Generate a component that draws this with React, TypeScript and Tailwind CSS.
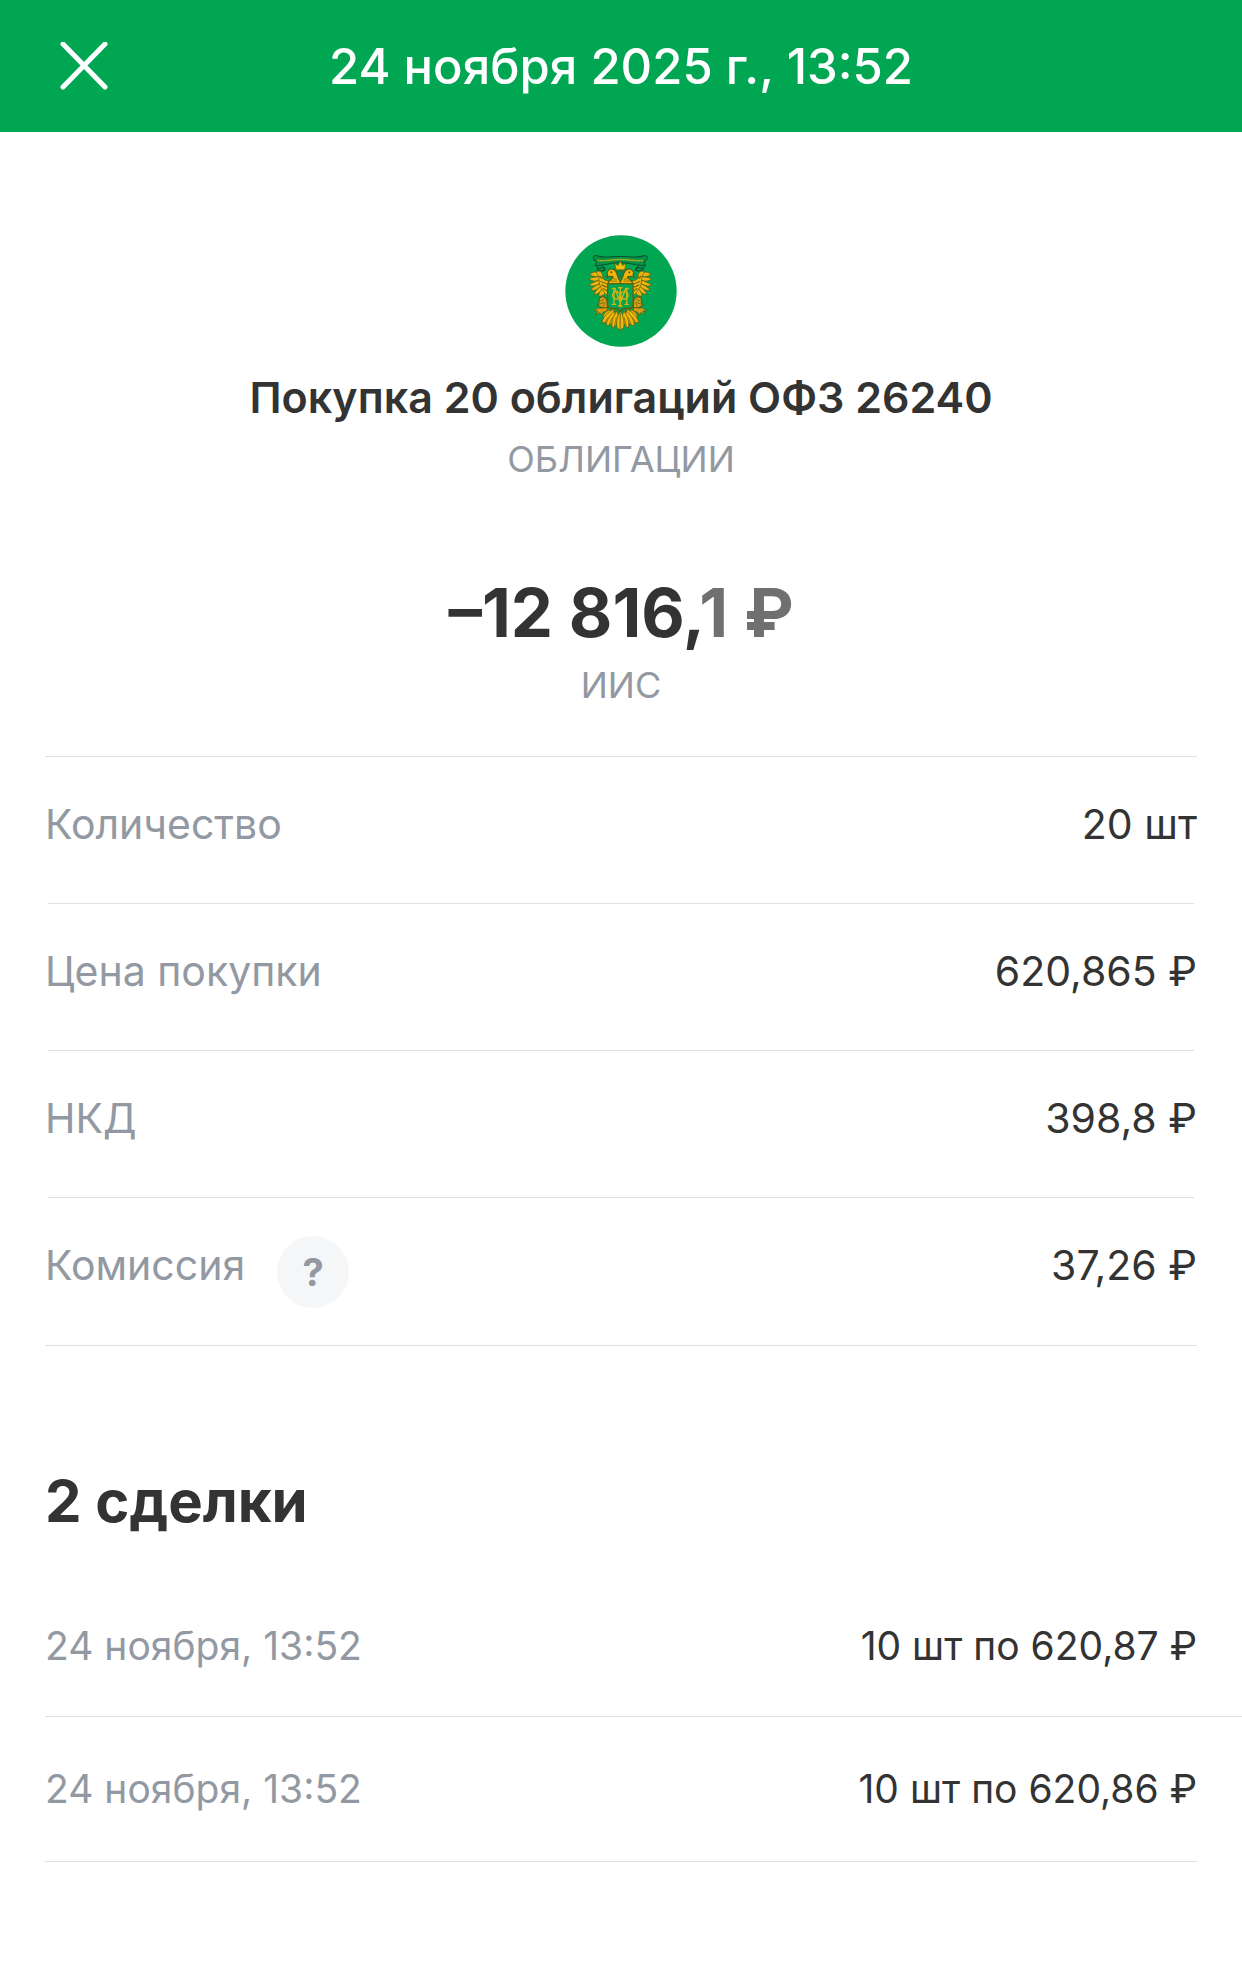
import type { FC, ReactNode } from "react";

interface DetailRowProps {
	label: string;
	value: string;
	children?: ReactNode;
}

const details: DetailRowProps[] = [
	{ label: "Количество", value: "20 шт" },
	{ label: "Цена покупки", value: "620,865 ₽" },
	{ label: "НКД", value: "398,8 ₽" },
];

const EagleHalf: FC = () => (
	<g strokeLinejoin="round" strokeLinecap="round">
		{/* Ribbon */}
		<path
			d="M212 95 C185 94 160 101 142 93 C135 90 129 97 132 102 L141 112 L137 122 C160 123 185 114 212 114"
			fill="#079247"
			stroke="#06562d"
			strokeWidth="3"
		/>
		<path
			d="M146 107 C170 109 190 104 212 104"
			fill="none"
			stroke="#a9ad17"
			strokeWidth="5"
			strokeDasharray="2 5"
		/>
		<path
			d="M142 126 C150 139 162 120 166 131 C164 141 150 139 143 133 M158 122 L166 136"
			fill="none"
			stroke="#06562d"
			strokeWidth="4"
		/>
		{/* Wing feathers */}
		<g fill="#e9b510" stroke="#5b5412" strokeWidth="2">
			<path d="M151 143 C139 138 127 143 121 148 C129 156 141 156 151 156Z" />
			<path d="M151 155 C138 157 126 157 119 161 C127 171 142 170 152 165Z" />
			<path d="M151 165 C139 169 127 173 119 180 C129 187 145 181 153 174Z" />
			<path d="M152 175 C141 181 129 187 123 195 C135 200 149 190 156 183Z" />
			<path d="M155 183 C145 190 136 199 133 208 C145 209 155 199 161 190Z" />
			<path d="M161 188 C153 196 147 205 147 214 C158 214 168 206 172 198Z" />
			<path d="M140 141 C150 134 159 144 159 153 C159 163 166 167 178 168 L178 215 C166 208 156 193 151 181 C147 169 151 155 140 141Z" />
		</g>
		<path
			d="M154 170 L170 176 M157 180 L170 186 M162 191 L171 197 M150 154 L158 160"
			stroke="#64570d"
			strokeWidth="3"
		/>
		{/* Head and neck */}
		<path
			d="M172 146 C176 129 193 129 199 141 C207 154 203 164 212 168 L212 180 L175 179 C172 168 187 165 191 156 C184 151 177 154 170 157 L175 149Z"
			fill="#efb60b"
			stroke="#5b5412"
			strokeWidth="3"
		/>
		<circle cx="185" cy="142" r="3" fill="#56500d" />
		<path
			d="M183 168 L202 169 M190 161 L200 163"
			stroke="#655608"
			strokeWidth="2"
		/>
		{/* Leg and claw */}
		<path
			d="M151 219 C160 211 173 217 173 233 L173 247 C163 251 150 246 144 239 C152 239 145 229 151 219Z"
			fill="#d3a218"
			stroke="#59520e"
			strokeWidth="3"
		/>
		<path
			d="M153 228 L162 224 M151 237 L163 232 M161 243 L167 233"
			stroke="#564f0e"
			strokeWidth="2"
		/>
		<path
			d="M160 249 L145 249 L134 257 L145 258 L140 269 L151 262 L157 270 L160 261 L173 257 L173 249Z"
			fill="#d99e16"
			stroke="#61550d"
			strokeWidth="2"
		/>
		{/* Tail */}
		<g fill="#efb60b" stroke="#5b5412" strokeWidth="2">
			<path d="M183 254 C172 255 162 265 160 277 L178 272Z" />
			<path d="M194 252 C174 260 161 275 157 292 C172 297 182 280 189 270Z" />
			<path d="M194 258 C180 270 171 285 170 300 C184 304 191 286 197 275Z" />
			<path d="M201 258 C190 275 184 290 188 308 C202 304 204 286 206 272Z" />
			<path d="M212 257 C203 270 199 290 202 307 L212 315Z" />
		</g>
		<path
			d="M176 277 L167 289 M188 278 L180 296 M200 278 L195 301"
			fill="none"
			stroke="#675807"
			strokeWidth="2"
		/>
	</g>
);

const OfzLogo: FC = () => (
	<svg viewBox="47 31 334 334" className="size-28" role="img" aria-label="ОФЗ">
		<circle cx="214" cy="198" r="166" fill="#01a653" />
		<EagleHalf />
		<g transform="translate(424 0) scale(-1 1)">
			<EagleHalf />
		</g>
		{/* Crown */}
		<path
			d="M199 135 L195 115 L205 122 L212 109 L219 122 L229 115 L225 135Z"
			fill="#f5bd08"
			stroke="#5b5412"
			strokeWidth="2"
			strokeLinejoin="round"
		/>
		<path
			d="M202 139 H222 L220 151 L212 159 L204 151Z"
			fill="#06904a"
			stroke="#5b5412"
			strokeWidth="2"
		/>
		{/* Shield with the monogram */}
		<path
			d="M174 176 H250 V238 C250 247 242 250 235 250 H222 L212 258 L202 250 H189 C181 250 174 247 174 238Z"
			fill="#01a653"
			stroke="#675e0c"
			strokeWidth="4"
		/>
		<g fill="none" stroke="#d9b313" strokeWidth="4" strokeLinecap="round">
			<path d="M188 190 H196 M193 190 V238 M188 238 H198 M228 190 H236 M231 190 V238 M226 238 H236" />
			<path d="M196 191 L212 232 L228 191" />
			<ellipse cx="200" cy="211" rx="11" ry="11" />
			<ellipse cx="224" cy="211" rx="11" ry="11" />
			<path d="M212 187 V245 M207 188 H217 M207 242 H217" />
		</g>
	</svg>
);

const DetailRow: FC<DetailRowProps> = ({ label, value, children }) => (
	<div className="flex h-[146px] items-start justify-between pt-[42px] text-[41px] leading-[50px]">
		<dt className="flex items-start text-[#9299a2]">
			{label}
			{children}
		</dt>
		<dd>{value}</dd>
	</div>
);

const Divider: FC = () => <hr className="mx-[3px] border-[#dddfe0]" />;

export default function App() {
	return (
		<div className="min-h-screen bg-white font-['Inter',sans-serif] text-[#333333]">
			<header className="grid h-[132px] grid-cols-[1fr_auto_1fr] items-center bg-[#01a653] px-[60px] text-white">
				<button type="button" aria-label="Закрыть" className="size-12">
					<svg
						viewBox="0 0 48 48"
						className="size-12"
						fill="none"
						stroke="currentColor"
						strokeWidth="5"
						strokeLinecap="round"
					>
						<path d="M3 2 45 45 M45 2 3 45" />
					</svg>
				</button>
				<h1 className="pt-0.5 text-[49px] font-medium leading-[60px]">
					24 ноября 2025 г., 13:52
				</h1>
			</header>

			<main>
				<section className="flex flex-col items-center pt-[103px] text-center">
					<OfzLogo />
					<h2 className="mt-[25px] text-[43px] font-semibold leading-[50px]">
						Покупка 20 облигаций ОФЗ 26240
					</h2>
					<p className="mt-[17px] text-[36px] leading-[40px] text-[#9299a2]">
						ОБЛИГАЦИИ
					</p>
					<p className="mt-[98px] text-[67px] font-bold leading-[72px]">
						–12 816,<span className="text-[#707070]">1 ₽</span>
					</p>
					<p className="mt-4 text-[36px] leading-[40px] text-[#9299a2]">ИИС</p>
				</section>

				<dl className="mx-[45px] mt-[51px] border-y border-[#dddfe0] pb-px">
					{details.map((detail) => (
						<div key={detail.label}>
							<DetailRow {...detail} />
							<Divider />
						</div>
					))}
					<DetailRow label="Комиссия" value="37,26 ₽">
						<button
							type="button"
							aria-label="Подробнее о комиссии"
							className="-mt-1 ml-8 size-[72px] rounded-full bg-[#f5f6f8] text-[38px] font-bold"
						>
							?
						</button>
					</DetailRow>
				</dl>

				<section className="mt-[120px]">
					<h2 className="px-[45px] text-[58px] font-bold leading-[70px]">
						2 сделки
					</h2>
					<ul className="mt-[85px] text-[39px] leading-[50px]">
						<li className="ml-[45px] flex justify-between border-b border-[#dddfe0] pb-[45px] pr-[45px]">
							<time className="text-[#9299a2]">24 ноября, 13:52</time>
							<span>10 шт по 620,87 ₽</span>
						</li>
						<li className="mx-[45px] flex justify-between border-b border-[#dddfe0] py-[47px]">
							<time className="text-[#9299a2]">24 ноября, 13:52</time>
							<span>10 шт по 620,86 ₽</span>
						</li>
					</ul>
				</section>
			</main>
		</div>
	);
}
